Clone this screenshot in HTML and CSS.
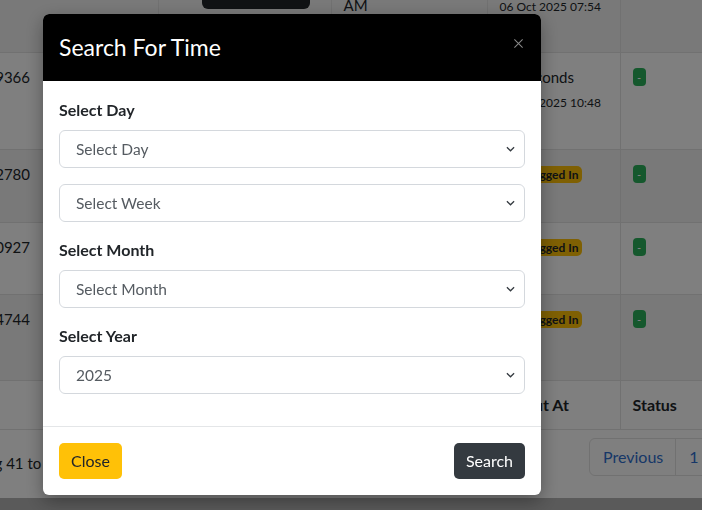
FILE: index.html
```html
<!DOCTYPE html>
<html lang="en">
<head>
<meta charset="utf-8">
<title>Search For Time</title>
<link rel="stylesheet" href="styles.css">
</head>
<body>
<div class="page">
  <table class="tbl">
    <colgroup>
      <col class="c1"><col class="c2"><col class="c3"><col class="c4"><col class="c5">
    </colgroup>
    <tbody>
      <tr class="r0 stripe">
        <td>0711229914</td>
        <td><button class="btn-view" type="button"></button></td>
        <td>07:54:21<br>AM</td>
        <td>12 minutes<div class="sub">06 Oct 2025 07:54</div></td>
        <td><span class="ok">-</span></td>
      </tr>
      <tr class="r1">
        <td>0712349366</td>
        <td></td>
        <td></td>
        <td>45 seconds<div class="sub">06 Oct 2025 10:48</div></td>
        <td><span class="ok">-</span></td>
      </tr>
      <tr class="r2 stripe">
        <td>0722562780</td>
        <td></td>
        <td></td>
        <td><span class="warn">Not Logged In</span></td>
        <td><span class="ok">-</span></td>
      </tr>
      <tr class="r3">
        <td>0733440927</td>
        <td></td>
        <td></td>
        <td><span class="warn">Not Logged In</span></td>
        <td><span class="ok">-</span></td>
      </tr>
      <tr class="r4 stripe">
        <td>0745674744</td>
        <td></td>
        <td></td>
        <td><span class="warn">Not Logged In</span></td>
        <td><span class="ok">-</span></td>
      </tr>
    </tbody>
    <tfoot>
      <tr class="r5">
        <th>Phone</th>
        <th>Action</th>
        <th>Login Time</th>
        <th>Logout At</th>
        <th>Status</th>
      </tr>
    </tfoot>
  </table>
  <div class="foot">
    <div class="info">Showing 41 to 50 of 120 entries</div>
    <nav class="pg">
      <a class="pg-item">Previous</a>
      <a class="pg-item">1</a>
      <a class="pg-item">2</a>
    </nav>
  </div>
</div>

<div class="backdrop"></div>

<div class="modal" role="dialog">
  <div class="mh">
    <h5 class="mt">Search For Time</h5>
    <svg class="x" viewBox="0 0 12 12" width="12" height="12" aria-label="Close">
      <path d="M1.5 1.5 L10.5 10.5 M10.5 1.5 L1.5 10.5" stroke="#8a8a8a" stroke-width="1.1" fill="none"/>
    </svg>
  </div>
  <div class="mb">
    <div class="grp">
      <label class="lbl">Select Day</label>
      <div class="sel-wrap">
        <select class="sel"><option>Select Day</option></select>
        <svg class="chev" viewBox="0 0 10 6" width="10" height="6"><path d="M1 1 L5 5 L9 1" stroke="#343a40" stroke-width="1.4" fill="none"/></svg>
      </div>
      <div class="sel-wrap">
        <select class="sel"><option>Select Week</option></select>
        <svg class="chev" viewBox="0 0 10 6" width="10" height="6"><path d="M1 1 L5 5 L9 1" stroke="#343a40" stroke-width="1.4" fill="none"/></svg>
      </div>
    </div>
    <div class="grp">
      <label class="lbl">Select Month</label>
      <div class="sel-wrap">
        <select class="sel"><option>Select Month</option></select>
        <svg class="chev" viewBox="0 0 10 6" width="10" height="6"><path d="M1 1 L5 5 L9 1" stroke="#343a40" stroke-width="1.4" fill="none"/></svg>
      </div>
    </div>
    <div class="grp">
      <label class="lbl">Select Year</label>
      <div class="sel-wrap">
        <select class="sel"><option>2025</option></select>
        <svg class="chev" viewBox="0 0 10 6" width="10" height="6"><path d="M1 1 L5 5 L9 1" stroke="#343a40" stroke-width="1.4" fill="none"/></svg>
      </div>
    </div>
  </div>
  <div class="mf">
    <button class="btn btn-close" type="button">Close</button>
    <button class="btn btn-search" type="button">Search</button>
  </div>
</div>
</body>
</html>
```

FILE: styles.css
```css
html, body {
  margin: 0;
  padding: 0;
}
body {
  width: 702px;
  height: 510px;
  overflow: hidden;
  background: #b4b4b4;
  font-family: Lato, "Open Sans", sans-serif;
  font-size: 16px;
  color: #212529;
}

.page {
  margin: -43px 0 0 -66px;
  width: 826px;
  background: #fff;
}

.tbl {
  border-collapse: collapse;
  table-layout: fixed;
  width: 826px;
  font-size: 15px;
  color: #212529;
}
.c1 { width: 224px; }
.c2 { width: 173px; }
.c3 { width: 156px; }
.c4 { width: 133px; }
.c5 { width: 140px; }

.tbl td,
.tbl th {
  padding: 12px;
  vertical-align: top;
  line-height: 24px;
  text-align: left;
  border-right: 1px solid #e2e2e2;
  border-bottom: 1px solid #e2e2e2;
  box-sizing: border-box;
}
.tbl td:first-child {
  padding-left: 9px;
}
.tbl th {
  font-weight: 700;
  font-size: 16px;
}
.stripe { background: #f3f3f3; }

.r0 td { height: 95px; }
.r1 td { height: 97px; }
.r2 td { height: 73px; }
.r3 td { height: 72px; }
.r4 td { height: 86px; }
.r5 th { height: 46px; }

.btn-view {
  display: block;
  margin-left: 31px;
  width: 108px;
  height: 40px;
  border: 0;
  border-radius: 6px;
  background: #212529;
}

.sub {
  font-size: 12px;
  line-height: 20px;
  margin-top: 4px;
}

.warn {
  display: inline-block;
  vertical-align: top;
  margin-top: 4px;
  padding: 2px 4px;
  line-height: 13px;
  font-size: 12px;
  font-weight: 700;
  border-radius: 5px;
  background: #ffc107;
  color: #212529;
}

.ok {
  display: inline-block;
  vertical-align: top;
  margin-top: 3px;
  width: 13px;
  height: 18px;
  border-radius: 4px;
  background: #2bb05a;
  color: #fff;
  font-size: 10px;
  line-height: 18px;
  text-align: center;
  font-weight: 700;
}

.foot {
  display: flex;
  align-items: flex-start;
  height: 68px;
  box-sizing: border-box;
  padding: 8px 0 0 12px;
  font-size: 15px;
}
.info {
  flex: 0 0 643px;
  margin-top: 13px;
  line-height: 24px;
}
.pg {
  display: flex;
  border: 1px solid #e2e2e2;
  border-radius: 6px;
  font-size: 16px;
}
.pg-item {
  padding: 6px 12px 6px 13px;
  line-height: 24px;
  color: #2e6fd0;
  border-right: 1px solid #e2e2e2;
}

.backdrop {
  position: fixed;
  inset: 0;
  background: rgba(0, 0, 0, 0.5);
}

.modal {
  position: fixed;
  left: 43px;
  top: 14px;
  width: 498px;
  background: #fff;
  border-radius: 6px;
  overflow: hidden;
  box-shadow: 0 6px 18px rgba(0, 0, 0, 0.35);
}

.mh {
  height: 67px;
  background: #000;
  display: flex;
  align-items: center;
  justify-content: space-between;
  padding: 0 16px;
}
.mt {
  margin: 0;
  color: #fff;
  font-size: 23px;
  font-weight: 400;
  line-height: 1.2;
}
.x {
  width: 11px;
  height: 11px;
  margin-top: -8px;
  margin-right: 1px;
}

.mb {
  padding: 17px 16px 16px;
}
.grp {
  margin-bottom: 16px;
}
.lbl {
  display: block;
  font-weight: 700;
  line-height: 24px;
  margin-bottom: 8px;
  color: #212529;
}
.sel-wrap {
  position: relative;
}
.sel-wrap + .sel-wrap {
  margin-top: 16px;
}
.sel {
  display: block;
  width: 100%;
  height: 38px;
  box-sizing: border-box;
  appearance: none;
  -webkit-appearance: none;
  border: 1px solid #d4d8dd;
  border-radius: 6px;
  padding: 0 36px 0 16px;
  background: #fff;
  font-family: inherit;
  font-size: 15.5px;
  color: #555b61;
}
.chev {
  position: absolute;
  right: 10px;
  top: 16px;
  width: 9px;
  height: 6px;
}

.mf {
  border-top: 1px solid #e4e6e8;
  padding: 16px;
  display: flex;
  justify-content: space-between;
}
.btn {
  font-family: inherit;
  font-size: 16px;
  line-height: 24px;
  padding: 6px 12px;
  border: 0;
  border-radius: 5px;
}
.btn-close {
  background: #ffc107;
  color: #212529;
}
.btn-search {
  background: #343a40;
  color: #fff;
}
```
